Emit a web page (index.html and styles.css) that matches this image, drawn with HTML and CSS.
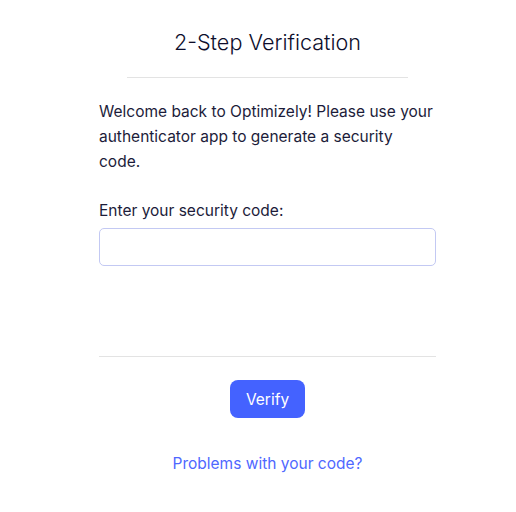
FILE: index.html
```html
<!DOCTYPE html>
<html lang="en">
<head>
<meta charset="UTF-8" />
<meta name="viewport" content="width=device-width, initial-scale=1" />
<title>2-Step Verification</title>
<link rel="stylesheet" href="styles.css">
</head>
<body>
  <div class="container">
    <h1>2-Step Verification</h1>
    <hr class="title-rule" />
    <form id="verifyForm" novalidate>
      <p class="intro">Welcome back to Optimizely! Please use your authenticator app to generate a security code.</p>

      <label for="code">Enter your security code:</label>
      <input type="text" id="code" name="code" autocomplete="one-time-code" />

      <hr class="form-rule" />

      <div class="actions">
        <button type="submit">Verify</button>
      </div>
      <div class="help">
        <a href="#">Problems with your code?</a>
      </div>
    </form>
  </div>
</body>
</html>
```

FILE: styles.css
```css
body {
  font-family: Inter, "Noto Sans", sans-serif;
  background: #ffffff;
  color: #1c1c3a;
  margin: 0;
}
.container {
  width: 337px;
  margin: 0 0 0 99px;
  padding-top: 27px;
}
h1 {
  margin: 0;
  font-size: 21.6px;
  font-weight: 300;
  line-height: 30px;
  color: #0d0d2b;
  text-align: center;
}
hr {
  border: none;
  border-top: 1px solid #e3e3e3;
  margin: 0;
}
.title-rule {
  margin: 20px 28px 0;
}
.intro {
  margin: 21px 0 0;
  font-size: 15.5px;
  line-height: 25px;
}
label {
  display: block;
  margin-top: 24px;
  font-size: 15.5px;
  line-height: 25px;
}
input[type="text"] {
  display: block;
  width: 100%;
  height: 38px;
  margin-top: 5px;
  padding: 0 12px;
  border: 1px solid #c3c9f3;
  border-radius: 5px;
  font-size: 15.5px;
  box-sizing: border-box;
}
input[type="text"]:focus {
  border-color: #4462ff;
  outline: none;
}
.form-rule {
  margin-top: 90px;
}
.actions {
  display: flex;
  justify-content: center;
  margin-top: 23px;
}
button {
  width: 75px;
  height: 38px;
  background-color: #4462ff;
  border: none;
  border-radius: 8px;
  font-family: inherit;
  font-size: 15.5px;
  color: #ffffff;
  cursor: pointer;
}
.help {
  margin-top: 33px;
  text-align: center;
  font-size: 15.5px;
  line-height: 25px;
}
.help a {
  color: #4f68ff;
  text-decoration: none;
}
```
